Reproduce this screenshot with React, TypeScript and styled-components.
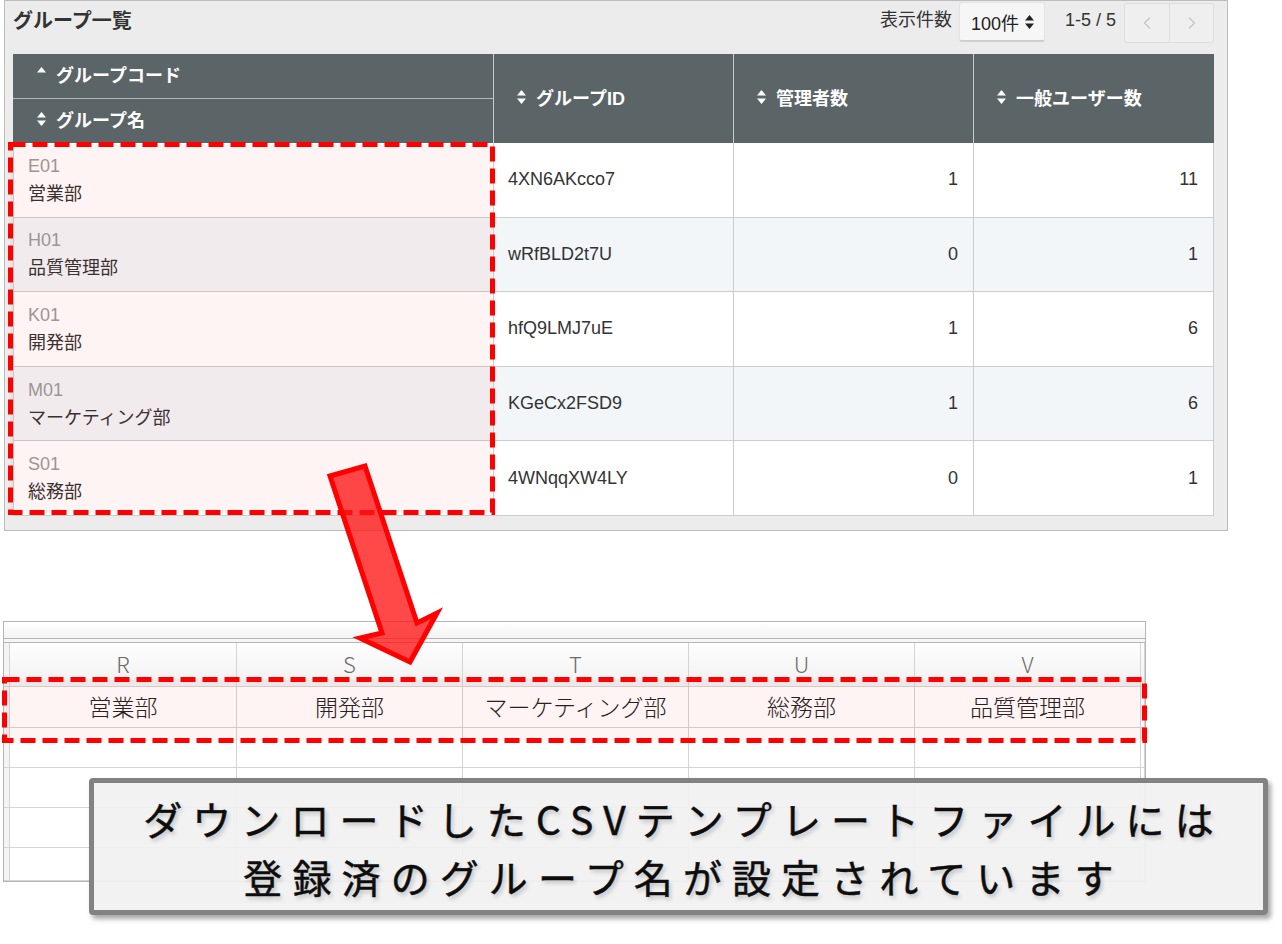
import React from "react";
import styled, { createGlobalStyle } from "styled-components";
import { ChevronLeft, ChevronRight } from "lucide-react";

const GlobalStyle = createGlobalStyle`
  html, body { margin: 0; padding: 0; background: #fff; }
  body { font-family: "Liberation Sans", "Noto Sans CJK JP", sans-serif; color: #333; }
  * { box-sizing: border-box; }
`;

const Page = styled.div`
  position: relative;
  width: 1282px;
  height: 944px;
  overflow: hidden;
  background: #fff;
`;

/* ---------- top panel ---------- */
const Panel = styled.section`
  margin-left: 4px;
  width: 1224px;
  height: 531px;
  border: 1px solid #bdbdbd;
  background: #ececec;
`;

const Toolbar = styled.div`
  display: flex;
  justify-content: space-between;
  align-items: flex-start;
  height: 53px;
  padding: 0 13px 0 8px;
`;

const Title = styled.h1`
  margin: 8px 0 0;
  font-size: 20px;
  line-height: 24px;
  font-weight: 700;
  color: #333;
`;

const Controls = styled.div`
  display: flex;
  align-items: flex-start;
`;

const Label = styled.span`
  margin-top: 7px;
  margin-right: 7px;
  font-size: 18px;
  line-height: 24px;
  color: #333;
`;

const Select = styled.div`
  display: flex;
  align-items: center;
  justify-content: space-between;
  margin-top: 1px;
  width: 86px;
  height: 40px;
  padding: 0 10px 0 11px;
  background: #f6f6f6;
  border: 1px solid #e2e2e2;
  border-bottom: 2px solid #cfcfcf;
  border-radius: 3px;
  font-size: 18px;
  color: #222;
`;

const Count = styled.span`
  margin: 7px 8px 0 20px;
  font-size: 18px;
  line-height: 24px;
  color: #333;
`;

const Pager = styled.div`
  display: flex;
  margin-top: 2px;
  height: 40px;
  border: 1px solid #dedede;
  border-radius: 3px;
  background: #efefef;
`;

const PageButton = styled.div<{ $first?: boolean }>`
  display: flex;
  align-items: center;
  justify-content: center;
  width: 44px;
  color: #c6c6c6;
  border-left: ${(p) => (p.$first ? "none" : "1px solid #dedede")};
`;

const Table = styled.div`
  margin-left: 8px;
  width: 1201px;
`;

const HeaderRow = styled.div`
  display: grid;
  grid-template-columns: 480px 240px 240px 241px;
  height: 89px;
  background: #5b6467;
  color: #fff;
  font-weight: 700;
  font-size: 18px;
`;

const HeadStack = styled.div`
  display: grid;
  grid-template-rows: 44px 45px;
`;

const HeadCell = styled.div<{ $divider?: boolean; $top?: boolean }>`
  display: flex;
  align-items: center;
  gap: 10px;
  padding-left: ${(p) => (p.$divider ? "23px" : "24px")};
  padding-bottom: 4px;
  border-left: ${(p) => (p.$divider ? "1px solid #c9cccd" : "none")};
  border-top: ${(p) => (p.$top ? "1px solid #b4b9ba" : "none")};
  white-space: nowrap;
`;

const BodyRow = styled.div<{ $alt: boolean }>`
  display: grid;
  grid-template-columns: 479px 240px 240px 240px;
  height: 74.6px;
  border: 1px solid #cccccc;
  border-top: none;
  background: ${(p) => (p.$alt ? "#f2f6f9" : "#ffffff")};
  font-size: 18px;
`;

const NameCell = styled.div`
  display: flex;
  flex-direction: column;
  justify-content: center;
  padding-left: 14px;
  line-height: 28px;
`;

const Code = styled.span`
  color: #9b9b9b;
`;

const Name = styled.span`
  color: #333;
`;

const DataCell = styled.div<{ $num?: boolean }>`
  display: flex;
  align-items: center;
  justify-content: ${(p) => (p.$num ? "flex-end" : "flex-start")};
  padding: 0 15px 0 14px;
  border-left: 1px solid #cccccc;
  color: #333;
`;

/* ---------- spreadsheet ---------- */
const Sheet = styled.div`
  margin: 90px 0 0 3px;
  width: 1143px;
  height: 261px;
  border: 1px solid #b5b5b5;
  overflow: hidden;
  background: #fff;
`;

const FormulaStrip = styled.div`
  height: 17px;
  border-bottom: 1px solid #b5b5b5;
  background: linear-gradient(#ffffff, #f3f3f3);
`;

const DoubleRule = styled.div`
  height: 4px;
  border-bottom: 1px solid #b5b5b5;
  background: #f6f6f6;
`;

const SheetGrid = styled.div`
  display: grid;
  grid-template-columns: 6px 227px 226px 226px 226px 226px 4px;
  grid-template-rows: 44px 41px 40px 40px 40px 33px;
`;

const SheetCell = styled.div<{ $kind: "gutter" | "head" | "data" | "blank" }>`
  display: flex;
  align-items: center;
  justify-content: center;
  padding-bottom: 3px;
  border-right: 1px solid #d4d4d4;
  border-bottom: 1px solid #d4d4d4;
  background: ${(p) =>
    p.$kind === "head"
      ? "linear-gradient(#fefefe, #f1f1f1)"
      : p.$kind === "gutter"
      ? "#f4f4f4"
      : "#fff"};
  color: ${(p) => (p.$kind === "head" ? "#6a6a6a" : "#222")};
  font-family: "Noto Sans CJK JP", "Liberation Sans", sans-serif;
  font-weight: 300;
  font-size: ${(p) => (p.$kind === "head" ? "22px" : "23px")};
  white-space: nowrap;
`;

/* ---------- overlays ---------- */
const Callout = styled.div`
  position: absolute;
  left: 89px;
  top: 778px;
  width: 1179px;
  height: 137px;
  display: flex;
  flex-direction: column;
  align-items: center;
  justify-content: center;
  padding-left: 10px;
  border: 5px solid #828282;
  border-radius: 4px;
  background: rgba(241, 241, 241, 0.93);
  box-shadow: 3px 4px 5px rgba(0, 0, 0, 0.35);
  font-family: "Noto Sans CJK JP", sans-serif;
  font-weight: 400;
  font-size: 39px;
  line-height: 58px;
  letter-spacing: 10.1px;
  color: #0d0d0d;
  text-shadow: 2px 3px 4px rgba(0, 0, 0, 0.22);
  -webkit-text-stroke: 0.5px #0d0d0d;
  white-space: nowrap;
`;

const Marker = styled.svg<{ $x: number; $y: number }>`
  position: absolute;
  left: ${(p) => p.$x}px;
  top: ${(p) => p.$y}px;
  overflow: visible;
  pointer-events: none;
`;

function DashedBox({ x, y, w, h }: { x: number; y: number; w: number; h: number }) {
  return (
    <Marker $x={x} $y={y} width={w} height={h}>
      <rect
        x={2.5}
        y={2.5}
        width={w - 5}
        height={h - 5}
        fill="rgba(255,0,0,0.045)"
        stroke="#ff0000"
        strokeWidth={5}
        strokeDasharray="15 7"
      />
    </Marker>
  );
}

function Arrow() {
  return (
    <Marker $x={320} $y={455} width={130} height={220}>
      <polygon
        points="10,21 45,11 97,168 117,158 90,207 40,183 62,178"
        fill="rgba(255,20,20,0.78)"
        stroke="#ff0000"
        strokeWidth={5}
        strokeLinejoin="miter"
      />
    </Marker>
  );
}

function SortBoth() {
  return (
    <svg width="9" height="14" viewBox="0 0 9 14">
      <path d="M4.5 0 L9 5.5 L0 5.5 Z M0 8.5 L9 8.5 L4.5 14 Z" fill="currentColor" />
    </svg>
  );
}

function SortUp() {
  return (
    <svg width="9" height="14" viewBox="0 0 9 14">
      <path d="M4.5 0 L9 5.5 L0 5.5 Z" fill="currentColor" />
    </svg>
  );
}

const rows = [
  { code: "E01", name: "営業部", id: "4XN6AKcco7", admin: 1, users: 11 },
  { code: "H01", name: "品質管理部", id: "wRfBLD2t7U", admin: 0, users: 1 },
  { code: "K01", name: "開発部", id: "hfQ9LMJ7uE", admin: 1, users: 6 },
  { code: "M01", name: "マーケティング部", id: "KGeCx2FSD9", admin: 1, users: 6 },
  { code: "S01", name: "総務部", id: "4WNqqXW4LY", admin: 0, users: 1 },
];

const letters = ["R", "S", "T", "U", "V"];
const sheetNames = ["営業部", "開発部", "マーケティング部", "総務部", "品質管理部"];

export default function App() {
  const sheetRows: React.ReactNode[] = [];
  sheetRows.push(<SheetCell key="h-g" $kind="gutter" />);
  letters.forEach((l) =>
    sheetRows.push(
      <SheetCell key={"h-" + l} $kind="head">
        {l}
      </SheetCell>
    )
  );
  sheetRows.push(<SheetCell key="h-e" $kind="head" />);
  sheetRows.push(<SheetCell key="n-g" $kind="gutter" />);
  sheetNames.forEach((n) =>
    sheetRows.push(
      <SheetCell key={"n-" + n} $kind="data">
        {n}
      </SheetCell>
    )
  );
  sheetRows.push(<SheetCell key="n-e" $kind="blank" />);
  for (let r = 0; r < 4; r++) {
    sheetRows.push(<SheetCell key={`e-${r}-g`} $kind="gutter" />);
    for (let c = 0; c < 6; c++) {
      sheetRows.push(<SheetCell key={`e-${r}-${c}`} $kind="blank" />);
    }
  }

  return (
    <Page>
      <GlobalStyle />
      <Panel>
        <Toolbar>
          <Title>グループ一覧</Title>
          <Controls>
            <Label>表示件数</Label>
            <Select>
              <span>100件</span>
              <svg width="9" height="14" viewBox="0 0 9 14">
                <path d="M4.5 0 L9 5.5 L0 5.5 Z M0 8.5 L9 8.5 L4.5 14 Z" fill="#222" />
              </svg>
            </Select>
            <Count>1-5 / 5</Count>
            <Pager>
              <PageButton $first>
                <ChevronLeft size={20} strokeWidth={1.6} />
              </PageButton>
              <PageButton>
                <ChevronRight size={20} strokeWidth={1.6} />
              </PageButton>
            </Pager>
          </Controls>
        </Toolbar>
        <Table>
          <HeaderRow>
            <HeadStack>
              <HeadCell>
                <SortUp />
                グループコード
              </HeadCell>
              <HeadCell $top>
                <SortBoth />
                グループ名
              </HeadCell>
            </HeadStack>
            <HeadCell $divider>
              <SortBoth />
              グループID
            </HeadCell>
            <HeadCell $divider>
              <SortBoth />
              管理者数
            </HeadCell>
            <HeadCell $divider>
              <SortBoth />
              一般ユーザー数
            </HeadCell>
          </HeaderRow>
          {rows.map((r, i) => (
            <BodyRow key={r.code} $alt={i % 2 === 1}>
              <NameCell>
                <Code>{r.code}</Code>
                <Name>{r.name}</Name>
              </NameCell>
              <DataCell>{r.id}</DataCell>
              <DataCell $num>{r.admin}</DataCell>
              <DataCell $num>{r.users}</DataCell>
            </BodyRow>
          ))}
        </Table>
      </Panel>

      <Sheet>
        <FormulaStrip />
        <DoubleRule />
        <SheetGrid>{sheetRows}</SheetGrid>
      </Sheet>

      <DashedBox x={8} y={142} w={487} h={373} />
      <DashedBox x={2} y={677} w={1145} h={66} />
      <Arrow />

      <Callout>
        <div>ダウンロードしたCSVテンプレートファイルには</div>
        <div>登録済のグループ名が設定されています</div>
      </Callout>
    </Page>
  );
}
